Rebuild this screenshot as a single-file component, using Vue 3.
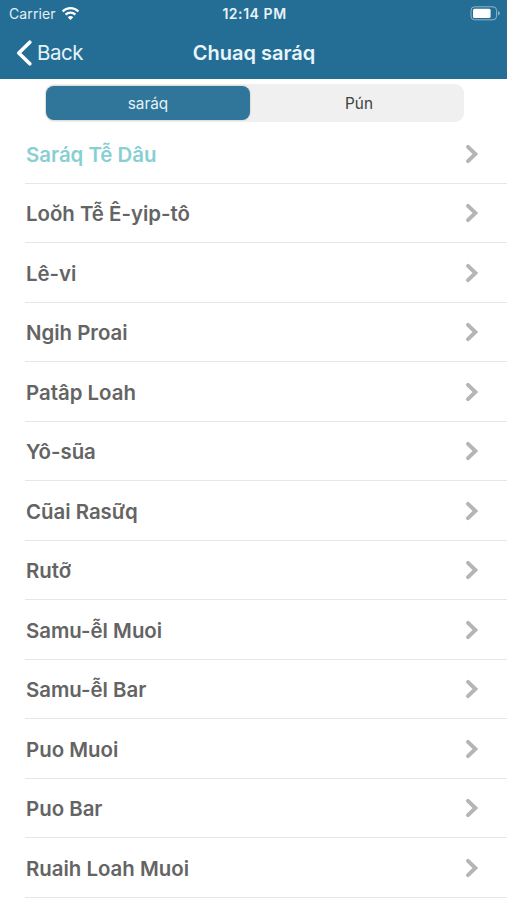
<template>
  <div class="screen">
    <header class="header">
      <div class="status">
        <div class="status__left">
          <span class="status__carrier">Carrier</span>
          <svg class="status__wifi" viewBox="0 0 20 15" fill="none" stroke="#ffffff">
            <path d="M1.7 5.3a11.8 11.8 0 0 1 16.6 0" stroke-width="2.3" />
            <path d="M4.8 8.7a7.4 7.4 0 0 1 10.4 0" stroke-width="2.3" />
            <path d="M10 14.4 7.1 11.4a4.2 4.2 0 0 1 5.8 0z" fill="#ffffff" stroke="none" />
          </svg>
        </div>
        <span class="status__time">12:14 PM</span>
        <svg class="status__battery" viewBox="0 0 30 15">
          <rect x="1" y="0.8" width="25.6" height="13" rx="3.6" fill="none" stroke="#8fb6cb" />
          <rect x="3" y="2.7" width="17.6" height="9.2" rx="1.5" fill="#ffffff" />
          <path d="M28 5v4.6q1.8-.8 1.8-2.3T28 5z" fill="#8fb6cb" />
        </svg>
      </div>
      <nav class="nav">
        <button class="nav__back">
          <svg class="nav__arrow" viewBox="0 0 16 26">
            <path d="M13.8 2.2 2.8 13l11 10.8" />
          </svg>
          <span>Back</span>
        </button>
        <h1 class="nav__title">Chuaq saráq</h1>
      </nav>
    </header>

    <div class="tabs">
      <button
        v-for="tab in tabs"
        :key="tab"
        :class="['tabs__item', { 'tabs__item--active': tab === activeTab }]"
        @click="activeTab = tab"
      >
        {{ tab }}
      </button>
    </div>

    <ul class="books">
      <li
        v-for="book in books"
        :key="book"
        :class="['book', { 'book--selected': book === selected }]"
        @click="selected = book"
      >
        <span class="book__name">{{ book }}</span>
        <svg class="book__arrow" viewBox="0 0 14 20">
          <path d="M3 2.8 10.4 10 3 17.2" />
        </svg>
      </li>
    </ul>
  </div>
</template>

<script setup>
import { ref } from 'vue'

const tabs = ['saráq', 'Pún']
const activeTab = ref('saráq')

const books = [
  'Saráq Tễ Dâu',
  'Loŏh Tễ Ê-yip-tô',
  'Lê-vi',
  'Ngih Proai',
  'Patâp Loah',
  'Yô-sũa',
  'Cũai Rasữq',
  'Rutỡ',
  'Samu-ễl Muoi',
  'Samu-ễl Bar',
  'Puo Muoi',
  'Puo Bar',
  'Ruaih Loah Muoi',
]
const selected = ref('Saráq Tễ Dâu')
</script>

<style>
body {
  margin: 0;
  background: #ffffff;
}
</style>

<style scoped>
.screen {
  height: 900px;
  overflow: hidden;
  background: #ffffff;
  font-family: Inter, 'Noto Sans', sans-serif;
}

button {
  margin: 0;
  padding: 0;
  border: 0;
  background: none;
  font-family: inherit;
}

.header {
  height: 79px;
  background: #246e95;
  color: #ffffff;
}

.status {
  display: grid;
  grid-template-columns: 1fr auto 1fr;
  align-items: center;
  height: 27px;
  padding: 0 7px 0 9px;
}
.status__left {
  display: flex;
  align-items: center;
  gap: 5px;
}
.status__carrier {
  font-size: 14px;
  letter-spacing: 0.12px;
  color: #e3eef4;
}
.status__wifi {
  width: 19px;
  height: 15px;
}
.status__time {
  font-size: 14px;
  font-weight: 600;
  letter-spacing: 0.55px;
  color: #e9f3f8;
}
.status__battery {
  justify-self: end;
  width: 30px;
  height: 15px;
}

.nav {
  display: grid;
  grid-template-columns: 1fr auto 1fr;
  align-items: center;
  height: 51px;
  padding: 0 15px 0 16px;
}
.nav__back {
  display: flex;
  align-items: center;
  gap: 5px;
  font-size: 20.5px;
  letter-spacing: -0.5px;
  color: #e6f2f8;
}
.nav__arrow {
  width: 16px;
  height: 26px;
  fill: none;
  stroke: #ffffff;
  stroke-width: 3.6;
  stroke-linecap: round;
  stroke-linejoin: round;
}
.nav__title {
  margin: 0;
  font-size: 20px;
  font-weight: 600;
  color: #e9f5fb;
}

.tabs {
  display: flex;
  box-sizing: border-box;
  width: 419px;
  height: 38px;
  margin: 5px 0 2px 45px;
  padding: 2px 1px;
  border-radius: 9px;
  background: #f0f0f0;
}
.tabs__item {
  flex: 1;
  padding: 0 0 0 5px;
  border-radius: 8px;
  font-size: 15.3px;
  color: #404040;
}
.tabs__item--active {
  flex: 0 0 204px;
  box-sizing: border-box;
  padding: 0;
  background: #30769b;
  color: #e4f1f8;
  box-shadow: 0 0 2px rgba(0, 0, 0, 0.25);
}

.books {
  margin: 0;
  padding: 0 0 0 25px;
  list-style: none;
}
.book {
  display: flex;
  align-items: center;
  justify-content: space-between;
  box-sizing: border-box;
  height: 59.5px;
  padding: 1px 28px 0 1px;
  border-bottom: 1px solid #e6e6e6;
  color: #646464;
}
.book__name {
  padding-top: 1px;
  font-size: 20.4px;
  font-weight: 600;
}
.book__arrow {
  width: 14px;
  height: 20px;
  fill: none;
  stroke: #b5b5b5;
  stroke-width: 3.9;
  stroke-linecap: round;
}
.book--selected {
  color: #87cfd3;
}
</style>
